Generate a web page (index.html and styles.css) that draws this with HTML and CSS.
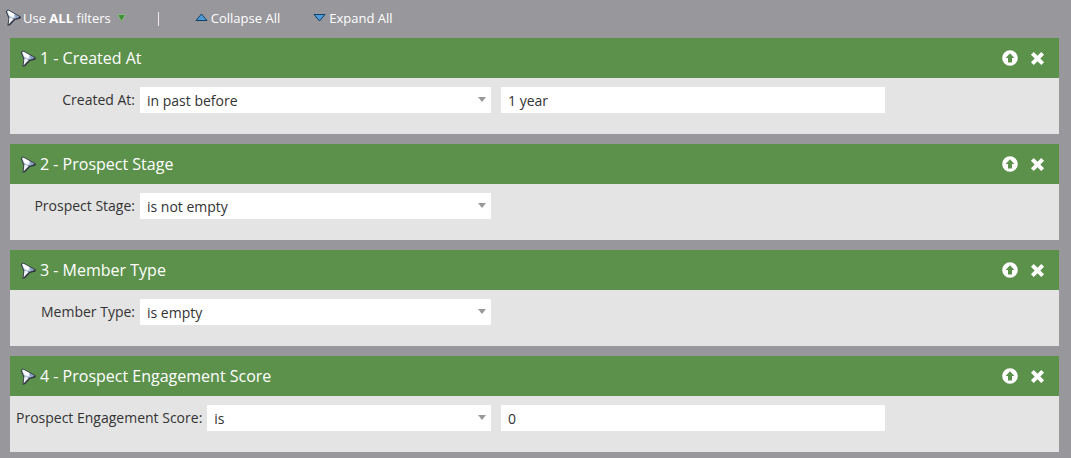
FILE: index.html
```html
<!DOCTYPE html>
<html lang="en">
<head>
<meta charset="utf-8">
<title>Filters</title>
<link rel="stylesheet" href="styles.css">
</head>
<body>
<svg class="defs" width="0" height="0" aria-hidden="true">
  <defs>
    <symbol id="funnel" viewBox="0 0 16 17">
      <path d="M0.8 2.4 L3 0.4 L15.8 7.6 L15.6 9.4 L10 11 L5 16.2 L2.6 16.8 L2.6 15 L3.6 9.6 Z" fill="#2f3440"/>
      <path d="M1.9 2.4 L3.2 1.4 L14.4 7.8 L10.4 9.4 L7 9.6 L3.8 7.4 Z" fill="#b9cce2"/>
      <path d="M2.4 2.2 L3.4 1.7 L9.4 5 L8.4 8.4 L4.4 6.8 Z" fill="#ffffff"/>
      <path d="M10 5.6 L14 7.9 L10.6 9 Z" fill="#7f9cc0"/>
      <path d="M4.4 8 L8.8 10 L3.6 15.4 Z" fill="#eef2f7"/>
    </symbol>
    <symbol id="up" viewBox="0 0 16 16">
      <path fill-rule="evenodd" d="M8 0.2a7.8 7.8 0 1 0 0 15.6a7.8 7.8 0 0 0 0-15.6ZM8 3.2L12.4 8H10V12.4H6V8H3.6Z" fill="#fff"/>
    </symbol>
    <symbol id="close" viewBox="0 0 16 16">
      <path d="M4 1 L8 5 L12 1 L15 4 L11 8 L15 12 L12 15 L8 11 L4 15 L1 12 L5 8 L1 4 Z" fill="#fff"/>
    </symbol>
  </defs>
</svg>

<div class="toolbar">
  <span class="tool tool-filter">
    <svg class="funnel-icon"><use href="#funnel"/></svg>
    <span>Use <b>ALL</b> filters</span>
    <svg class="mini-arrow" viewBox="0 0 8 7"><path d="M0.5 0.5H7.5L4 6.5Z" fill="#3f8f35" stroke="#9cc98f" stroke-width="0.6"/></svg>
  </span>
  <span class="sep"></span>
  <span class="tool tool-collapse">
    <svg class="tri" viewBox="0 0 13 9"><path d="M6.5 1L12 7.5H1Z" fill="#4d9ad6" stroke="#123f66" stroke-width="1"/></svg>
    <span>Collapse All</span>
  </span>
  <span class="tool tool-expand">
    <svg class="tri" viewBox="0 0 13 9"><path d="M1 1.5H12L6.5 8Z" fill="#4d9ad6" stroke="#123f66" stroke-width="1"/></svg>
    <span>Expand All</span>
  </span>
</div>

<section class="card">
  <header class="card-head">
    <svg class="funnel-icon"><use href="#funnel"/></svg>
    <h2 class="card-title">1 - Created At</h2>
    <svg class="act act-up"><use href="#up"/></svg>
    <svg class="act"><use href="#close"/></svg>
  </header>
  <div class="card-body">
    <div class="field">
      <label class="field-label">Created At:</label>
      <div class="select"><span>in past before</span><i class="caret"></i></div>
    </div>
    <div class="textbox">1 year</div>
  </div>
</section>

<section class="card">
  <header class="card-head">
    <svg class="funnel-icon"><use href="#funnel"/></svg>
    <h2 class="card-title">2 - Prospect Stage</h2>
    <svg class="act act-up"><use href="#up"/></svg>
    <svg class="act"><use href="#close"/></svg>
  </header>
  <div class="card-body">
    <div class="field">
      <label class="field-label">Prospect Stage:</label>
      <div class="select"><span>is not empty</span><i class="caret"></i></div>
    </div>
  </div>
</section>

<section class="card">
  <header class="card-head">
    <svg class="funnel-icon"><use href="#funnel"/></svg>
    <h2 class="card-title">3 - Member Type</h2>
    <svg class="act act-up"><use href="#up"/></svg>
    <svg class="act"><use href="#close"/></svg>
  </header>
  <div class="card-body">
    <div class="field">
      <label class="field-label">Member Type:</label>
      <div class="select"><span>is empty</span><i class="caret"></i></div>
    </div>
  </div>
</section>

<section class="card">
  <header class="card-head">
    <svg class="funnel-icon"><use href="#funnel"/></svg>
    <h2 class="card-title">4 - Prospect Engagement Score</h2>
    <svg class="act act-up"><use href="#up"/></svg>
    <svg class="act"><use href="#close"/></svg>
  </header>
  <div class="card-body">
    <div class="field">
      <label class="field-label">Prospect Engagement Score:</label>
      <div class="select"><span>is</span><i class="caret"></i></div>
    </div>
    <div class="textbox">0</div>
  </div>
</section>
</body>
</html>
```
FILE: styles.css
```css
* { box-sizing: border-box; }
html, body { height: 100%; }
body {
  margin: 0;
  padding: 0 12px 0 10px;
  background: #98979c;
  font-family: "Open Sans", sans-serif;
  font-size: 14px;
  color: #333;
  overflow: hidden;
}
.defs { position: absolute; }
.toolbar {
  height: 38px;
  display: flex;
  align-items: center;
  color: #fff;
  font-size: 13px;
  padding-bottom: 3px;
  margin-left: -5px;
}
.tool { display: flex; align-items: center; }
.funnel-icon { width: 16px; height: 17px; flex: none; }
.tool-filter span { margin-left: 2px; }
.mini-arrow { width: 9px; height: 8px; margin-left: 6px; margin-top: 1px; }
.sep { width: 1px; height: 14px; margin-left: 32px; margin-top: 2px; background: #f3e6f0; }
.tool-collapse { margin-left: 36px; }
.tool-expand { margin-left: 33px; }
.tri { width: 13px; height: 9px; margin-right: 3px; }
.card { margin-bottom: 10px; }
.card-head {
  height: 40px;
  background: #5c914c;
  display: flex;
  align-items: center;
  padding: 0 14px 0 10px;
  gap: 4px;
}
.card-title {
  margin: 0;
  flex: 1;
  font-size: 16px;
  font-weight: 400;
  color: #fff;
  line-height: 40px;
}
.act { width: 15px; height: 15px; margin-left: 8px; }
.act-up { width: 16px; height: 16px; margin-left: 0; }
.card-body {
  height: 56px;
  background: #e4e4e4;
  display: flex;
  align-items: flex-start;
  padding-top: 9px;
  gap: 10px;
}
.field { width: 481px; display: flex; align-items: flex-start; gap: 5px; }
.field-label {
  min-width: 125px;
  padding-left: 6px;
  text-align: right;
  color: #333;
  white-space: nowrap;
  line-height: 25px;
}
.select, .textbox {
  height: 26px;
  background: #fff;
  color: #333;
  padding-left: 7px;
  line-height: 28px;
}
.select {
  flex: 1;
  display: flex;
  justify-content: space-between;
  align-items: flex-start;
  padding-right: 5px;
}
.caret {
  width: 0;
  height: 0;
  margin-top: 10px;
  border-left: 4.5px solid transparent;
  border-right: 4.5px solid transparent;
  border-top: 5px solid #999;
}
.textbox { width: 384px; }
```
